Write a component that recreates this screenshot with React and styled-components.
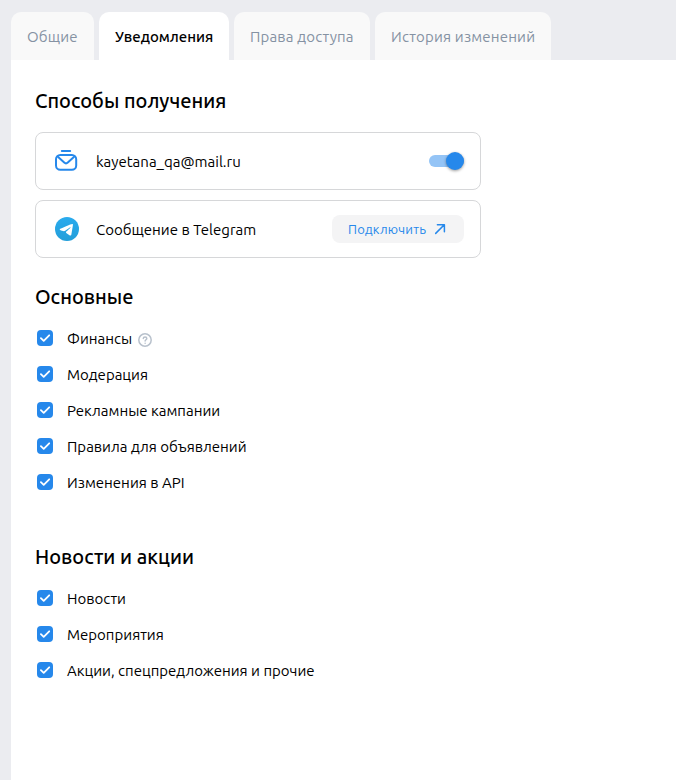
import React, { useState } from "react";
import styled, { createGlobalStyle } from "styled-components";

const GlobalStyle = createGlobalStyle`
  *, *::before, *::after { box-sizing: border-box; }
  body {
    margin: 0;
    background: #ebecf0;
    color: #000;
    font-family: Ubuntu, "Noto Sans", sans-serif;
  }
`;

const Page = styled.div`
  display: flex;
  flex-direction: column;
  min-height: 780px;
  padding: 12px 0 0 11px;
  overflow: hidden;
`;

const Tabs = styled.nav`
  display: flex;
  gap: 5px;
  height: 48px;
`;

const Tab = styled.button`
  width: ${(p) => p.$width}px;
  padding: 2px 0 0 16px;
  border: 0;
  border-radius: 10px 10px 0 0;
  background: ${(p) => (p.$active ? "#fff" : "#f9f9f9")};
  color: ${(p) => (p.$active ? "#000" : "#8592a3")};
  font: ${(p) => (p.$active ? 500 : 400)} 15px/46px Ubuntu, "Noto Sans", sans-serif;
  letter-spacing: ${(p) => (p.$active ? 0 : 0.17)}px;
  text-align: left;
  white-space: nowrap;
`;

const Panel = styled.main`
  flex: 1;
  padding: 24px;
  background: #fff;
`;

const Title = styled.h2`
  margin: 0;
  font-size: 20px;
  font-weight: 500;
  line-height: 34px;
`;

const Channels = styled.div`
  display: flex;
  flex-direction: column;
  gap: 10px;
  width: 446px;
  margin: 14px 0 22px;
`;

const Channel = styled.div`
  display: flex;
  align-items: center;
  height: 58px;
  padding: 0 16px 0 19px;
  border: 1px solid #d6d7d9;
  border-radius: 8px;
`;

const ChannelIcon = styled.span`
  display: flex;
  width: 24px;
  height: 24px;
  margin-right: 17px;
`;

const Label = styled.span`
  padding-top: 2px;
  font-size: 15px;
  line-height: 22px;
  white-space: nowrap;
`;

const Switch = styled.button`
  display: flex;
  align-items: center;
  justify-content: flex-end;
  width: 35px;
  height: 12px;
  margin-left: auto;
  padding: 0;
  border: 0;
  border-radius: 6px;
  background: #94c4f6;
`;

const Knob = styled.span`
  width: 18px;
  height: 18px;
  flex: none;
  border-radius: 50%;
  background: #2688eb;
  box-shadow: 0 1px 3px rgba(0, 0, 0, 0.4);
`;

const ConnectButton = styled.button`
  display: flex;
  align-items: center;
  justify-content: space-between;
  width: 132px;
  height: 28px;
  margin-left: auto;
  padding: 0 18px 0 16px;
  border: 0;
  border-radius: 8px;
  background: #f4f4f5;
  color: #2688eb;
  font: 400 13px/28px Ubuntu, "Noto Sans", sans-serif;
  letter-spacing: 0.2px;
`;

const Options = styled.div`
  display: flex;
  flex-direction: column;
  gap: 12px;
  margin: 12px 0 ${(p) => p.$after || 0}px;
`;

const Option = styled.label`
  display: flex;
  align-items: center;
  height: 24px;
  padding-left: 2px;
`;

const CheckBox = styled.span`
  display: flex;
  width: 16px;
  height: 16px;
  margin-right: 14px;
  border-radius: 4px;
  background: #2688eb;
`;

const Hint = styled.span`
  display: flex;
  margin: 3px 0 0 6px;
`;

const MailIcon = () => (
  <svg width="24" height="24" viewBox="0 0 24 24" fill="none" stroke="#2688eb" strokeWidth="2" strokeLinecap="round" strokeLinejoin="round">
    <path d="M6.8 2h8.4" />
    <rect x="1" y="6" width="20.2" height="14.8" rx="4.3" />
    <path d="M2.6 7.6l6.600 6c1.100 1 2.500 1 3.600 0l6.600-6" />
  </svg>
);

const TelegramIcon = () => (
  <svg width="24" height="24" viewBox="0 0 24 24">
    <defs>
      <linearGradient id="tg" x1="0" y1="0" x2="0" y2="1">
        <stop offset="0" stopColor="#2aabee" />
        <stop offset="1" stopColor="#229ed9" />
      </linearGradient>
    </defs>
    <circle cx="12" cy="12" r="12" fill="url(#tg)" />
    <path fill="#fff" transform="translate(-1.3 -1.1) scale(1.1)" d="M5.400 11.900c3.500-1.500 5.800-2.500 7-3 3.300-1.400 4-1.600 4.500-1.600.4 0 .7.3.6.8-.2 1.900-1 6.400-1.400 8.500-.3 1.500-1 1.400-1.800.9-1-.7-1.600-1.100-2.600-1.800-1.100-.8-.4-1.200.3-1.900.2-.2 3.300-3.100 3.300-3.300 0-.2-.1-.2-.3-.1l-4.600 3.100c-.8.6-1.500.4-2.900 0-1-.3-1.900-.5-2.100-1.600z" />
  </svg>
);

const ArrowIcon = () => (
  <svg width="12" height="12" viewBox="0 0 12 12" fill="none" stroke="#2688eb" strokeWidth="1.5" strokeLinecap="round" strokeLinejoin="round">
    <path d="M1.700 10.400L10.300 1.800M3.400 1.700h7v7" />
  </svg>
);

const CheckIcon = () => (
  <svg width="16" height="16" viewBox="0 0 16 16" fill="none" stroke="#fff" strokeWidth="1.8" strokeLinecap="round" strokeLinejoin="round">
    <path d="M3.900 8.100l2.800 2.700 5.500-5.500" />
  </svg>
);

const HelpIcon = () => (
  <svg width="14" height="14" viewBox="0 0 14 14" fill="none" stroke="#b8c1cc" strokeWidth="1.5" strokeLinecap="round">
    <circle cx="7" cy="7" r="6.200" />
    <path d="M5.300 5.600c0-2.300 3.500-2.200 3.500-.1 0 1.200-1.700 1.300-1.700 2.500" />
    <path d="M7.100 10.200v.1" />
  </svg>
);

const tabs = [
  { text: "Общие", width: 83 },
  { text: "Уведомления", width: 130 },
  { text: "Права доступа", width: 136 },
  { text: "История изменений", width: 176 },
];

const mainOptions = [
  { text: "Финансы", hint: true },
  { text: "Модерация" },
  { text: "Рекламные кампании" },
  { text: "Правила для объявлений" },
  { text: "Изменения в API" },
];

const newsOptions = [
  { text: "Новости" },
  { text: "Мероприятия" },
  { text: "Акции, спецпредложения и прочие" },
];

function OptionList({ items, after }) {
  return (
    <Options $after={after}>
      {items.map((o) => (
        <Option key={o.text}>
          <CheckBox><CheckIcon /></CheckBox>
          <Label>{o.text}</Label>
          {o.hint && <Hint><HelpIcon /></Hint>}
        </Option>
      ))}
    </Options>
  );
}

export default function App() {
  const [active, setActive] = useState(1);
  return (
    <>
      <GlobalStyle />
      <Page>
        <Tabs>
          {tabs.map((t, i) => (
            <Tab key={t.text} $active={i === active} $width={t.width} onClick={() => setActive(i)}>
              {t.text}
            </Tab>
          ))}
        </Tabs>
        <Panel>
          <Title>Способы получения</Title>
          <Channels>
            <Channel>
              <ChannelIcon><MailIcon /></ChannelIcon>
              <Label>kayetana_qa@mail.ru</Label>
              <Switch aria-label="kayetana_qa@mail.ru"><Knob /></Switch>
            </Channel>
            <Channel>
              <ChannelIcon><TelegramIcon /></ChannelIcon>
              <Label>Сообщение в Telegram</Label>
              <ConnectButton>Подключить<ArrowIcon /></ConnectButton>
            </Channel>
          </Channels>
          <Title>Основные</Title>
          <OptionList items={mainOptions} after={46} />
          <Title>Новости и акции</Title>
          <OptionList items={newsOptions} />
        </Panel>
      </Page>
    </>
  );
}
